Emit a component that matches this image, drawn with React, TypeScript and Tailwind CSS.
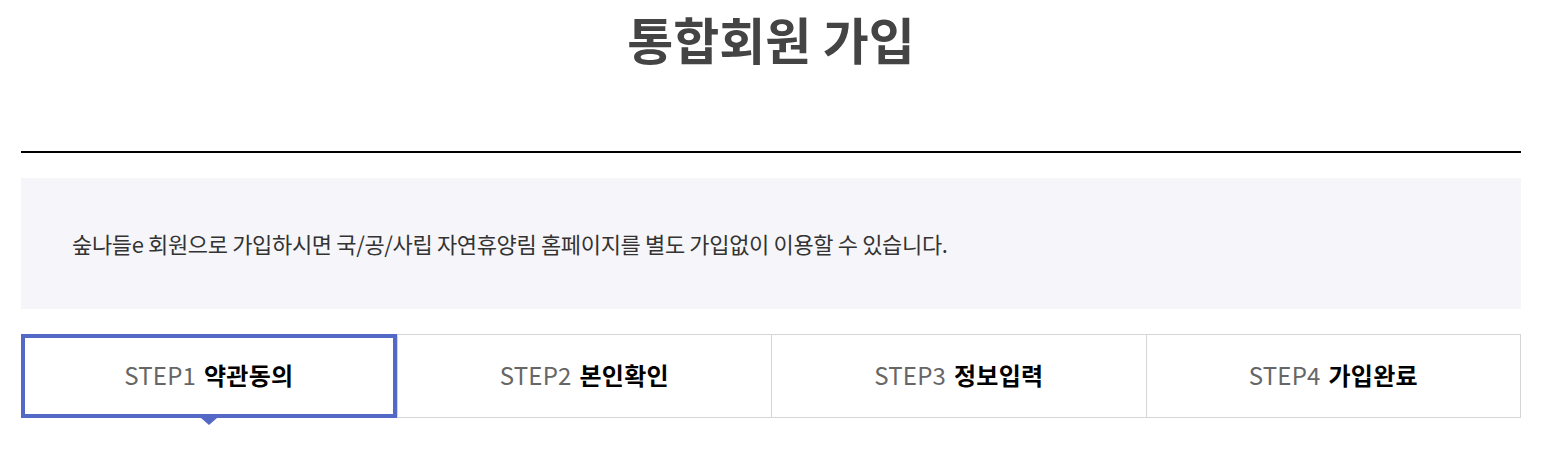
const steps = [
  { no: "STEP1", label: "약관동의" },
  { no: "STEP2", label: "본인확인" },
  { no: "STEP3", label: "정보입력" },
  { no: "STEP4", label: "가입완료" },
];

export default function App() {
  const active = 0;
  return (
    <div className="w-[1562px] h-[461px] bg-white font-['Noto_Sans_CJK_KR','Noto_Sans',sans-serif]">
      <div className="mx-[21px] w-[1500px]">
        {/* 타이틀 */}
        <div className="h-[153px] border-b-2 border-black pt-[8px]">
          <h1 className="text-center text-[50px] leading-[60px] font-bold text-[#444]">
            통합회원 가입
          </h1>
        </div>

        {/* 안내 박스 */}
        <div className="mt-[25px] h-[131px] bg-[#f6f6fa] flex items-center pl-[51px]">
          <p className="text-[22px] text-[#333] tracking-[-0.35px]">
            숲나들e 회원으로 가입하시면 국/공/사립 자연휴양림 홈페이지를 별도 가입없이 이용할 수 있습니다.
          </p>
        </div>

        {/* 단계 */}
        <ul className="mt-[25px] grid grid-cols-4 border border-[#d5d5d5]">
          {steps.map((s, i) => (
            <li
              key={s.no}
              className={
                i === active
                  ? "relative -ml-px -my-px h-[84px] pb-[2px] border-4 border-[#5468c6] flex items-center justify-center text-[24px] tracking-[0.2px]"
                  : "h-[82px] pb-[2px] border-l border-[#d5d5d5] first:border-l-0 flex items-center justify-center text-[24px] tracking-[0.2px]"
              }
            >
              <span className="text-[#666]">{s.no}</span>
              <span className="ml-[8px] font-bold text-black">{s.label}</span>
              {i === active && (
                <span className="absolute left-1/2 -bottom-[11px] -translate-x-1/2 border-x-[8px] border-x-transparent border-t-[7px] border-t-[#5468c6]" />
              )}
            </li>
          ))}
        </ul>
      </div>
    </div>
  );
}
